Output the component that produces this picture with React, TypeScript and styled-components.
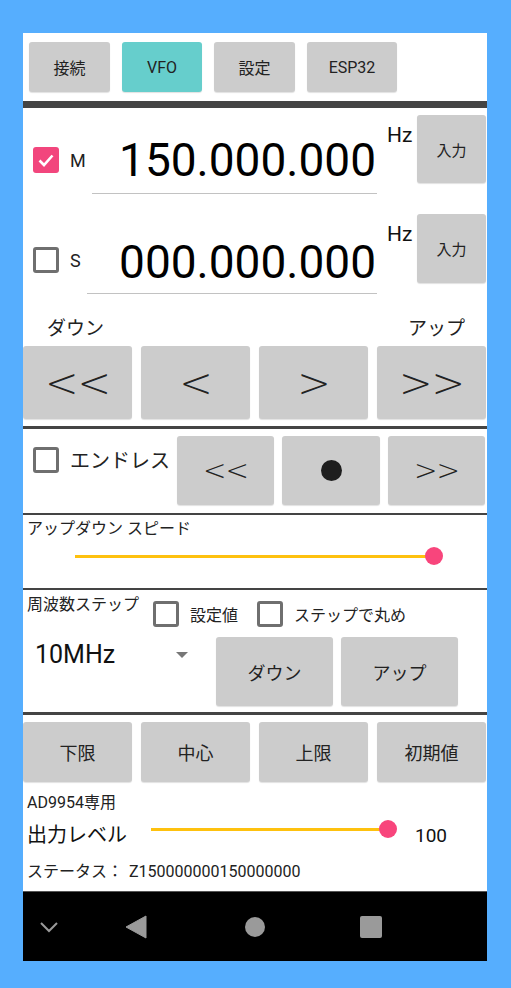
import React from "react";
import styled, { createGlobalStyle } from "styled-components";

const GlobalStyle = createGlobalStyle`
  html, body {
    margin: 0;
    padding: 0;
    background: #56aefe;
  }
  body {
    font-family: Roboto, "Noto Sans CJK JP", sans-serif;
    color: #222;
  }
`;

const Page = styled.div`
  width: 511px;
  height: 988px;
  padding: 33px 0 0 23px;
  box-sizing: border-box;
`;

const Screen = styled.div`
  width: 464px;
  height: 928px;
  background: #fff;
  display: flex;
  flex-direction: column;
  overflow: hidden;
`;

const TabRow = styled.div`
  height: 68px;
  box-sizing: border-box;
  padding: 9px 0 0 6px;
  display: flex;
  gap: 12px;
  align-items: flex-start;
`;

const Key = styled.div<{ $active?: boolean; $w?: number; $h?: number; $size?: number }>`
  width: ${p => (p.$w ? `${p.$w}px` : "auto")};
  height: ${p => (p.$h ? `${p.$h}px` : "100%")};
  background: ${p => (p.$active ? "#66cecc" : "#cccccc")};
  border-radius: 3px;
  box-shadow: 0 1px 1px rgba(0, 0, 0, 0.12);
  display: flex;
  align-items: center;
  justify-content: center;
  font-size: ${p => p.$size || 16}px;
  color: #222;
  box-sizing: border-box;
`;

const Bar = styled.div<{ $h: number }>`
  height: ${p => p.$h}px;
  background: #444;
  flex-shrink: 0;
`;

const FreqRow = styled.div<{ $h: number }>`
  height: ${p => p.$h}px;
  display: flex;
  align-items: flex-start;
  flex-shrink: 0;
`;

const CheckLabel = styled.div<{ $w: number; $top: number; $size?: number }>`
  width: ${p => p.$w}px;
  margin-top: ${p => p.$top}px;
  padding-left: 10px;
  box-sizing: border-box;
  display: flex;
  align-items: center;
  gap: 11px;
  font-size: ${p => p.$size || 18}px;
  color: #222;
  white-space: nowrap;
`;

const Box = styled.div<{ $checked?: boolean }>`
  width: 26px;
  height: 26px;
  flex-shrink: 0;
  box-sizing: border-box;
  border-radius: 3px;
  border: ${p => (p.$checked ? "none" : "3px solid #6f6f6f")};
  background: ${p => (p.$checked ? "#f2467d" : "transparent")};
  display: flex;
  align-items: center;
  justify-content: center;
`;

const FreqField = styled.div<{ $w: number; $top: number; $pb: number }>`
  width: ${p => p.$w}px;
  margin-top: ${p => p.$top}px;
  padding-bottom: ${p => p.$pb}px;
  border-bottom: 1.5px solid #c2c2c2;
  text-align: right;
  font-family: Roboto, sans-serif;
  font-size: 46px;
  line-height: 46px;
  color: #000;
  padding-right: 1px;
  box-sizing: border-box;
`;

const Unit = styled.div<{ $top: number }>`
  width: 40px;
  margin-top: ${p => p.$top}px;
  padding-left: 10px;
  box-sizing: border-box;
  font-size: 21px;
  line-height: 21px;
  color: #111;
`;

const DirLabels = styled.div`
  height: 41px;
  box-sizing: border-box;
  padding: 14px 22px 0 24px;
  display: flex;
  justify-content: space-between;
  font-size: 19px;
  line-height: 20px;
  color: #222;
`;

const Grid4 = styled.div<{ $h: number }>`
  width: 463px;
  height: ${p => p.$h}px;
  display: grid;
  grid-template-columns: repeat(4, 1fr);
  gap: 9px;
  flex-shrink: 0;
`;

const Arrow = styled.span<{ $size: number }>`
  font-family: "DejaVu Sans", sans-serif;
  font-weight: 200;
  font-size: ${p => p.$size}px;
  letter-spacing: -1px;
  color: #222;
`;

const Gap = styled.div<{ $h: number }>`
  height: ${p => p.$h}px;
  flex-shrink: 0;
`;

const EndlessRow = styled.div`
  height: 84px;
  display: flex;
  align-items: flex-start;
  flex-shrink: 0;
`;

const Grid3 = styled.div`
  margin-top: 7px;
  height: 69px;
  display: grid;
  grid-template-columns: 97px 98px 97px;
  gap: 8px;
`;

const Dot = styled.div`
  width: 21px;
  height: 21px;
  border-radius: 50%;
  background: #1e1e1e;
`;

const SpeedBlock = styled.div`
  height: 73px;
  box-sizing: border-box;
  padding: 6px 0 0 4px;
  flex-shrink: 0;
`;

const SmallLabel = styled.div`
  font-size: 16px;
  line-height: 16px;
  color: #222;
  white-space: nowrap;
`;

const SliderWrap = styled.div<{ $w: number; $left: number; $top: number }>`
  position: relative;
  width: ${p => p.$w}px;
  height: 20px;
  margin-left: ${p => p.$left}px;
  margin-top: ${p => p.$top}px;
  flex-shrink: 0;
`;

const Track = styled.div`
  position: absolute;
  left: 0;
  right: 0;
  top: 9px;
  height: 3px;
  background: #fec10e;
`;

const Thumb = styled.div`
  position: absolute;
  top: 1px;
  width: 18px;
  height: 18px;
  margin-left: -9px;
  border-radius: 50%;
  background: #f8457c;
`;

const StepBlock = styled.div`
  height: 122px;
  flex-shrink: 0;
  display: flex;
  flex-direction: column;
`;

const StepTop = styled.div`
  height: 40px;
  display: flex;
  align-items: flex-start;
`;

const StepTitle = styled(SmallLabel)`
  width: 130px;
  padding: 7px 0 0 4px;
  box-sizing: border-box;
`;

const Option = styled.div<{ $gapAfter?: number }>`
  margin-top: 11px;
  margin-right: ${p => p.$gapAfter || 0}px;
  display: flex;
  align-items: center;
  gap: 11px;
  font-size: 16px;
  color: #222;
  white-space: nowrap;
`;

const StepBottom = styled.div`
  height: 82px;
  display: flex;
  align-items: flex-start;
`;

const Spinner = styled.div`
  width: 193px;
  padding: 12px 0 0 12px;
  box-sizing: border-box;
  display: flex;
  align-items: flex-start;
  font-size: 25px;
  line-height: 25px;
  color: #111;
`;

const Caret = styled.div`
  margin: 10px 0 0 auto;
  margin-right: 28px;
  width: 0;
  height: 0;
  border-left: 6px solid transparent;
  border-right: 6px solid transparent;
  border-top: 6px solid #777;
`;

const StepKeys = styled.div`
  margin-top: 7px;
  display: flex;
  gap: 8px;
`;

const BottomKeys = styled.div`
  height: 67px;
  box-sizing: border-box;
  padding-top: 7px;
  flex-shrink: 0;
`;

const OutputBlock = styled.div`
  height: 109px;
  flex-shrink: 0;
  box-sizing: border-box;
  padding: 13px 0 0 4px;
`;

const LevelRow = styled.div`
  margin-top: 3px;
  height: 30px;
  display: flex;
  align-items: center;
`;

const LevelName = styled.div`
  width: 124px;
  padding-top: 8px;
  font-size: 20px;
  color: #111;
  white-space: nowrap;
`;

const LevelValue = styled.div`
  margin-left: 27px;
  padding-top: 12px;
  font-size: 19px;
  color: #111;
`;

const Status = styled(SmallLabel)`
  margin-top: 20px;
  word-spacing: 2px;
`;

const NavBar = styled.div`
  height: 70px;
  flex-shrink: 0;
  background: #000;
  border-top: 1px solid #555;
  box-sizing: border-box;
  display: flex;
  align-items: center;
`;

const NavSlot = styled.div<{ $w: number }>`
  width: ${p => p.$w}px;
  display: flex;
  justify-content: center;
`;

const Check = () => (
  <svg width="20" height="20" viewBox="0 0 20 20">
    <path d="M3.5 10.5 L8 15 L16.5 5.5" fill="none" stroke="#fff" strokeWidth="2.6" />
  </svg>
);

interface SliderProps {
  width: number;
  left: number;
  top: number;
  value: number;
}

const Slider: React.FC<SliderProps> = props => (
  <SliderWrap $w={props.width} $left={props.left} $top={props.top}>
    <Track />
    <Thumb style={{ left: `${props.value}%` }} />
  </SliderWrap>
);

const App: React.FC = () => {
  return (
    <Page>
      <GlobalStyle />
      <Screen>
        <TabRow>
          <Key $w={81} $h={50}>接続</Key>
          <Key $w={80} $h={50} $active>VFO</Key>
          <Key $w={81} $h={50}>設定</Key>
          <Key $w={90} $h={50}>ESP32</Key>
        </TabRow>
        <Bar $h={7} />

        <FreqRow $h={97}>
          <CheckLabel $w={69} $top={39}>
            <Box $checked>
              <Check />
            </Box>
            M
          </CheckLabel>
          <FreqField $w={285} $top={29} $pb={10}>150.000.000</FreqField>
          <Unit $top={17}>Hz</Unit>
          <Key $w={69} $h={68} $size={15} style={{ marginTop: 7 }}>入力</Key>
        </FreqRow>
        <FreqRow $h={100}>
          <CheckLabel $w={64} $top={42}>
            <Box />
            S
          </CheckLabel>
          <FreqField $w={290} $top={34} $pb={8}>000.000.000</FreqField>
          <Unit $top={19}>Hz</Unit>
          <Key $w={69} $h={69} $size={15} style={{ marginTop: 9 }}>入力</Key>
        </FreqRow>

        <DirLabels>
          <span>ダウン</span>
          <span>アップ</span>
        </DirLabels>
        <Grid4 $h={73}>
          <Key><Arrow $size={40}>&lt;&lt;</Arrow></Key>
          <Key><Arrow $size={40}>&lt;</Arrow></Key>
          <Key><Arrow $size={40}>&gt;</Arrow></Key>
          <Key><Arrow $size={40}>&gt;&gt;</Arrow></Key>
        </Grid4>
        <Gap $h={7} />
        <Bar $h={3} />

        <EndlessRow>
          <CheckLabel $w={154} $top={16} $size={20}>
            <Box />
            エンドレス
          </CheckLabel>
          <Grid3>
            <Key><Arrow $size={28}>&lt;&lt;</Arrow></Key>
            <Key><Dot /></Key>
            <Key><Arrow $size={28}>&gt;&gt;</Arrow></Key>
          </Grid3>
        </EndlessRow>
        <Bar $h={2} />

        <SpeedBlock>
          <SmallLabel>アップダウン スピード</SmallLabel>
          <Slider width={359} left={48} top={9} value={100} />
        </SpeedBlock>
        <Bar $h={2} />

        <StepBlock>
          <StepTop>
            <StepTitle>周波数ステップ</StepTitle>
            <Option $gapAfter={19}>
              <Box />
              設定値
            </Option>
            <Option>
              <Box />
              ステップで丸め
            </Option>
          </StepTop>
          <StepBottom>
            <Spinner>
              10MHz
              <Caret />
            </Spinner>
            <StepKeys>
              <Key $w={117} $h={69} $size={18}>ダウン</Key>
              <Key $w={117} $h={69} $size={18}>アップ</Key>
            </StepKeys>
          </StepBottom>
        </StepBlock>
        <Bar $h={3} />

        <BottomKeys>
          <Grid4 $h={60}>
            <Key $size={18}>下限</Key>
            <Key $size={18}>中心</Key>
            <Key $size={18}>上限</Key>
            <Key $size={18}>初期値</Key>
          </Grid4>
        </BottomKeys>

        <OutputBlock>
          <SmallLabel>AD9954専用</SmallLabel>
          <LevelRow>
            <LevelName>出力レベル</LevelName>
            <Slider width={237} left={0} top={0} value={100} />
            <LevelValue>100</LevelValue>
          </LevelRow>
          <Status>ステータス： Z150000000150000000</Status>
        </OutputBlock>

        <NavBar>
          <NavSlot $w={52}>
            <svg width="20" height="12" viewBox="0 0 20 12">
              <path d="M2 2 L10 10 L18 2" fill="none" stroke="#9a9a9a" strokeWidth="2" />
            </svg>
          </NavSlot>
          <NavSlot $w={122}>
            <svg width="22" height="24" viewBox="0 0 22 24">
              <path d="M21 1 L21 23 L1 12 Z" fill="#9a9a9a" stroke="#9a9a9a" strokeWidth="1" strokeLinejoin="round" />
            </svg>
          </NavSlot>
          <NavSlot $w={116}>
            <svg width="22" height="22" viewBox="0 0 22 22">
              <circle cx="11" cy="11" r="10" fill="#9a9a9a" />
            </svg>
          </NavSlot>
          <NavSlot $w={116}>
            <svg width="22" height="22" viewBox="0 0 22 22">
              <rect x="0" y="0" width="22" height="22" rx="2" fill="#9a9a9a" />
            </svg>
          </NavSlot>
        </NavBar>
      </Screen>
    </Page>
  );
};

export default App;
